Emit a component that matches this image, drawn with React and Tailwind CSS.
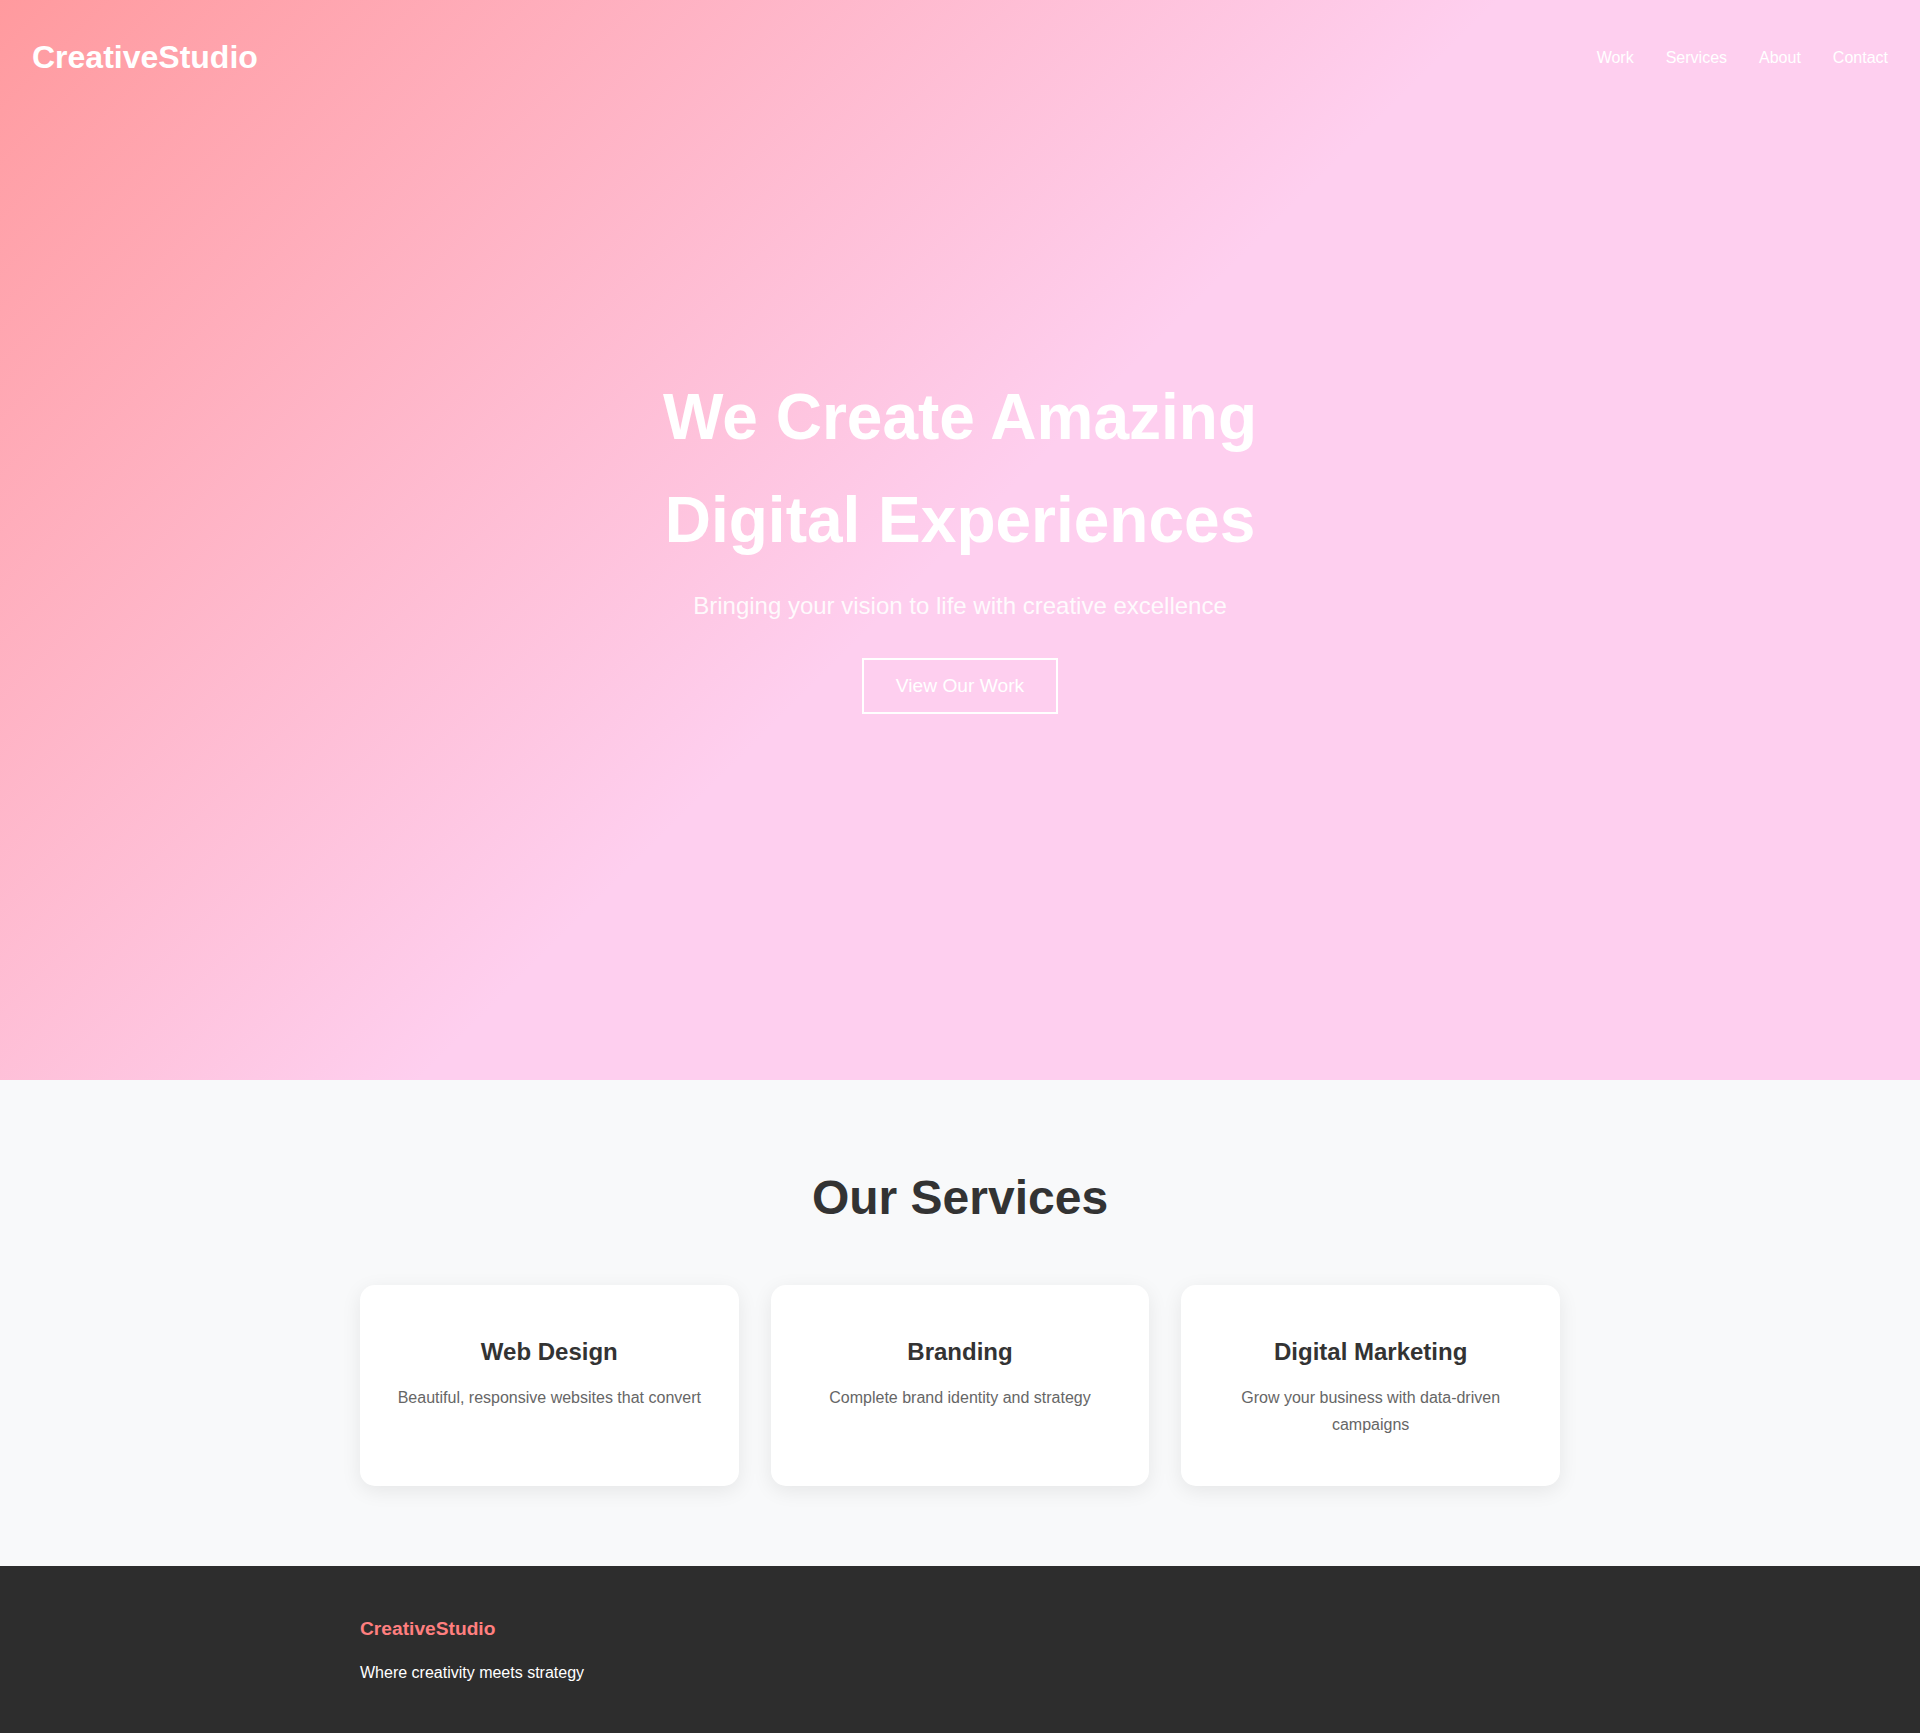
import React from 'react';

const navLinks = ['Work', 'Services', 'About', 'Contact'];

const services = [
  { title: 'Web Design', text: 'Beautiful, responsive websites that convert' },
  { title: 'Branding', text: 'Complete brand identity and strategy' },
  { title: 'Digital Marketing', text: 'Grow your business with data-driven campaigns' },
];

const App = () => {
  return (
    <div className="font-['Liberation_Sans',Arial,sans-serif] leading-[1.6] text-[#333]">

      {/* Hero */}
      <section className="relative h-[1080px] flex items-center justify-center text-center text-white bg-[linear-gradient(135deg,#ff9a9e_0%,#fecfef_50%,#fecfef_100%)]">

        {/* Header sits over the hero */}
        <header className="absolute top-0 inset-x-0 h-[115px] px-8 flex items-center justify-between">
          <div className="text-[32px] font-bold">CreativeStudio</div>
          <nav className="flex gap-8 text-base">
            {navLinks.map((link) => (
              <a key={link} href="#" className="text-white">
                {link}
              </a>
            ))}
          </nav>
        </header>

        <div>
          <h1 className="text-[64px] font-bold mb-4">
            We Create Amazing
            <br />
            Digital Experiences
          </h1>
          <p className="text-[24px] mb-8 opacity-90">
            Bringing your vision to life with creative excellence
          </p>
          <button className="border-2 border-white text-white text-[19.2px] leading-[30px] px-8 py-[11px]">
            View Our Work
          </button>
        </div>
      </section>

      {/* Services */}
      <section className="bg-[#f8f9fa] py-20 px-8">
        <div className="max-w-[1200px] mx-auto">
          <h2 className="text-center text-[48px] font-bold mb-12">Our Services</h2>
          <div className="grid grid-cols-3 gap-8">
            {services.map((s) => (
              <div
                key={s.title}
                className="bg-white rounded-[15px] px-8 py-12 text-center shadow-[0_5px_20px_rgba(0,0,0,0.08)]"
              >
                <h3 className="text-[24px] font-bold mb-[12.8px]">{s.title}</h3>
                <p className="text-[#666] text-base leading-[1.7]">{s.text}</p>
              </div>
            ))}
          </div>
        </div>
      </section>

      {/* Footer */}
      <footer className="bg-[#2d2d2d] text-white py-12 px-8">
        <div className="max-w-[1200px] mx-auto">
          <h3 className="text-[19.2px] font-bold text-[#ff7f7f] mb-4">CreativeStudio</h3>
          <p className="text-base">Where creativity meets strategy</p>
        </div>
      </footer>
    </div>
  );
};

export default App;
